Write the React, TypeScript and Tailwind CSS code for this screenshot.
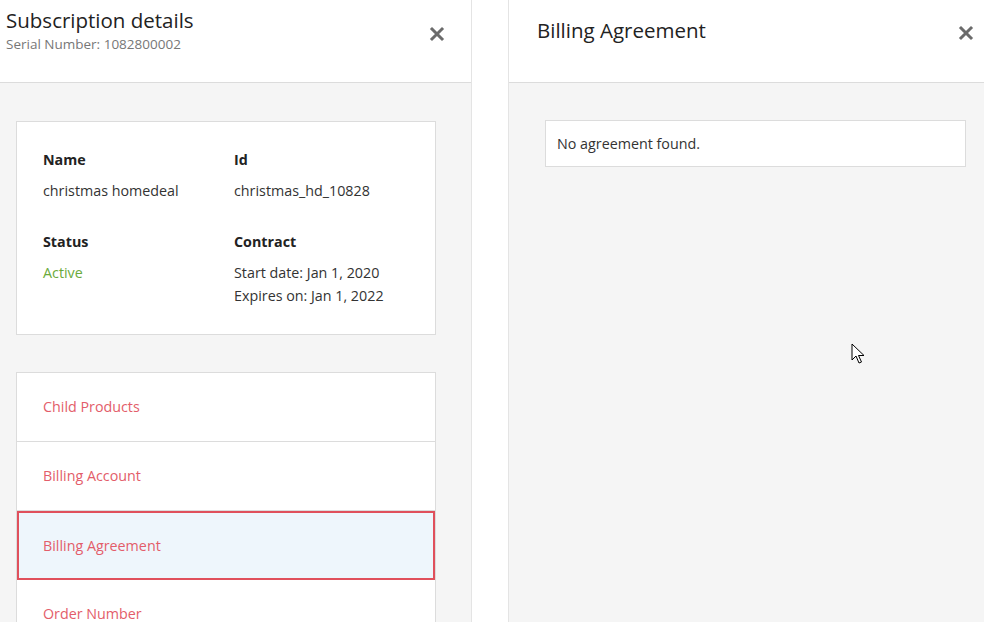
import React from 'react';

function CloseIcon() {
  return (
    <svg className="w-[16px] h-[16px]" viewBox="0 0 16 16" fill="none" stroke="#6b6b6b" strokeWidth={3} strokeLinecap="square">
      <path d="M3 3l10 10M13 3L3 13" />
    </svg>
  );
}

const links = ['Child Products', 'Billing Account', 'Billing Agreement', 'Order Number'];

export default function App() {
  return (
    <div
      className="relative w-[984px] h-[622px] overflow-hidden bg-white flex text-[#333]"
      style={{ fontFamily: '"Open Sans", "Noto Sans", sans-serif' }}
    >
      {/* left panel */}
      <div className="w-[472px] h-full flex flex-col border-r border-[#e4e4e4] bg-[#f5f5f5]">
        <div className="h-[83px] shrink-0 bg-white border-b border-[#dcdcdc] flex justify-between pl-[6px] pr-[26px]">
          <div className="pt-[7px]">
            <h1 className="text-[20.5px] leading-[26px] text-[#222]">Subscription details</h1>
            <p className="text-[13.5px] leading-[18px] text-[#777] mt-[2px]">Serial Number: 1082800002</p>
          </div>
          <button className="mt-[26px] h-[16px]">
            <CloseIcon />
          </button>
        </div>

        <div className="px-[16px] pt-[38px]">
          <div className="w-[420px] bg-white border border-[#dcdcdc] pt-[28px] pb-[27px] pl-[26px] text-[14.3px]">
            <div className="grid grid-cols-[191px_1fr] gap-y-[30px]">
              <div>
                <div className="font-bold leading-[20px] text-[#222]">Name</div>
                <div className="mt-[9px] leading-[23px]">christmas homedeal</div>
              </div>
              <div>
                <div className="font-bold leading-[20px] text-[#222]">Id</div>
                <div className="mt-[9px] leading-[23px]">christmas_hd_10828</div>
              </div>
              <div>
                <div className="font-bold leading-[20px] text-[#222]">Status</div>
                <div className="mt-[9px] leading-[23px] text-[#6aaa3c]">Active</div>
              </div>
              <div>
                <div className="font-bold leading-[20px] text-[#222]">Contract</div>
                <div className="mt-[9px] leading-[23px]">
                  <div>Start date: Jan 1, 2020</div>
                  <div>Expires on: Jan 1, 2022</div>
                </div>
              </div>
            </div>
          </div>

          <div className="w-[420px] mt-[37px] bg-white border border-[#dcdcdc] border-b-0 text-[14.3px] text-[#e35d6a]">
            {links.map((l) =>
              l === 'Billing Agreement' ? (
                <div key={l} className="h-[69px] flex items-center pl-[24px] border-2 border-[#e0505c] bg-[#eef6fc]">
                  {l}
                </div>
              ) : (
                <div key={l} className="h-[69px] flex items-center pl-[26px] border-b border-[#dcdcdc]">
                  {l}
                </div>
              )
            )}
          </div>
        </div>
      </div>

      {/* gap */}
      <div className="w-[36px] h-full bg-white" />

      {/* right panel */}
      <div className="flex-1 h-full flex flex-col border-l border-[#e4e4e4] bg-[#f5f5f5]">
        <div className="h-[83px] shrink-0 bg-white border-b border-[#dcdcdc] flex justify-between pl-[28px] pr-[10px]">
          <h2 className="pt-[17px] text-[20.5px] leading-[26px] text-[#222]">Billing Agreement</h2>
          <button className="mt-[25px] h-[16px]">
            <CloseIcon />
          </button>
        </div>
        <div className="pt-[37px] pl-[36px]">
          <div className="w-[421px] h-[47px] bg-white border border-[#dcdcdc] flex items-center pl-[11px] text-[14.3px]">
            No agreement found.
          </div>
        </div>
      </div>

      {/* mouse cursor */}
      <svg className="absolute left-[851px] top-[343px]" width="14" height="22" viewBox="0 0 14 22">
        <path d="M1 1v16l4-4 3 7 2.5-1-3-6.5H13z" fill="#fff" stroke="#000" strokeWidth="1" strokeLinejoin="round" />
      </svg>
    </div>
  );
}
